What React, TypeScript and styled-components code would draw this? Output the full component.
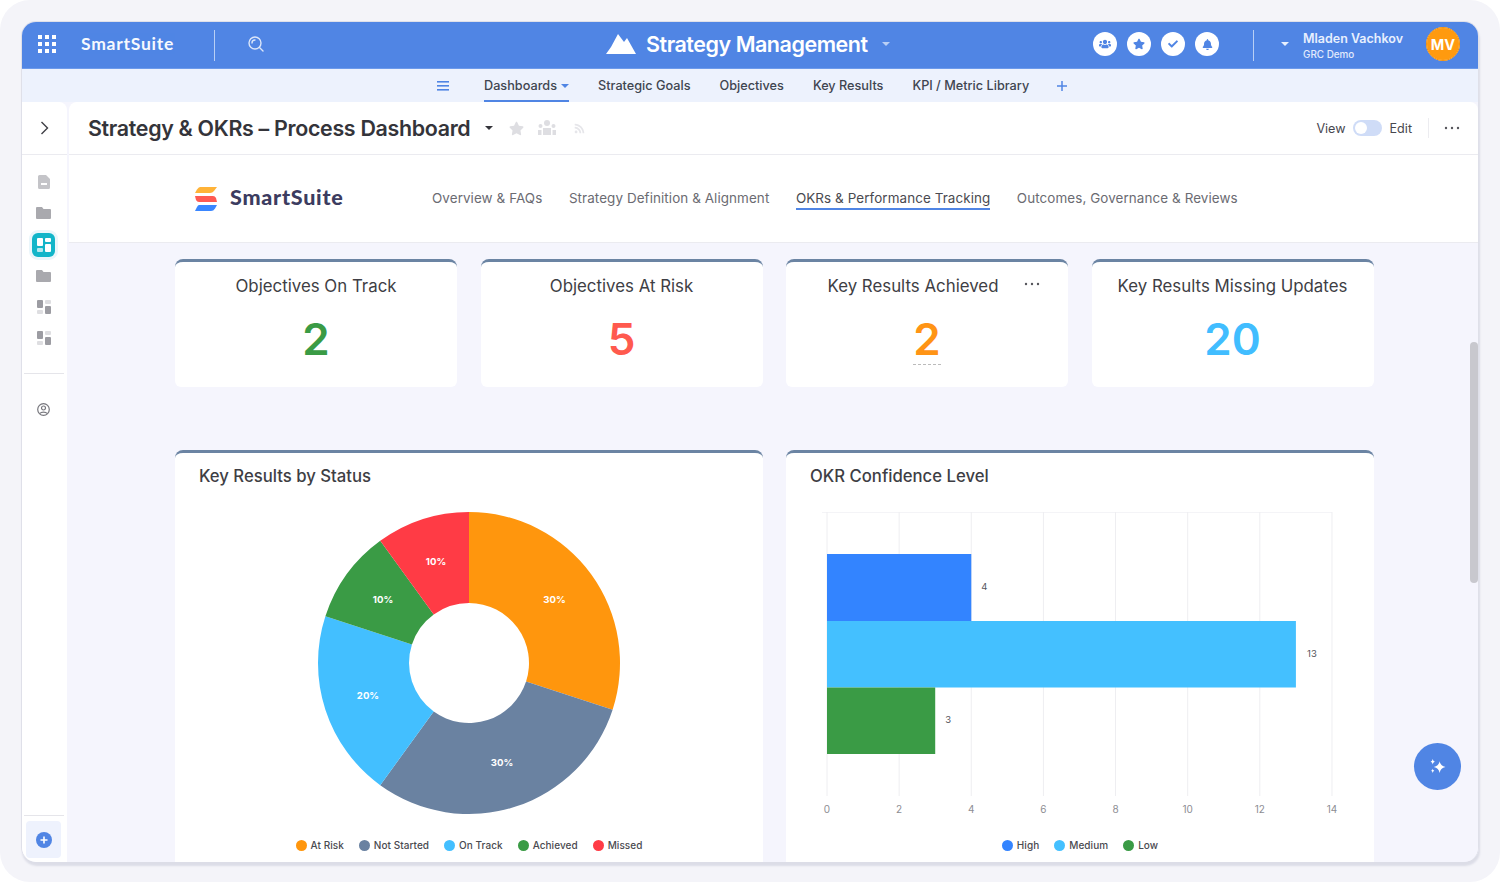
import React from 'react';
import styled, { createGlobalStyle } from 'styled-components';
import { FaUsers, FaStar, FaCheck, FaBell, FaRss } from 'react-icons/fa';

const Global = createGlobalStyle`
  html, body { margin: 0; padding: 0; background: #fff; }
  body { font-family: Inter, "Liberation Sans", sans-serif; -webkit-font-smoothing: antialiased; }
  * { box-sizing: border-box; }
`;

const Frame = styled.div`
  width: 1500px; height: 882px; padding: 21px 21px 20px 21px;
  background: #f4f4f9; border-radius: 30px; overflow: hidden;
`;
const Win = styled.div`
  position: relative; width: 1458px; height: 841px; overflow: hidden;
  border: 1px solid #dfe0e9; border-bottom: 0; border-radius: 15px;
  background: #f5f5fd; display: flex; flex-direction: column;
`;
const WinShadowWrap = styled.div`
  border-radius: 15px; box-shadow: 1px 4px 2px #dcdde7;
`;
const Header = styled.header`
  height: 47px; background: #5085e4; display: flex; align-items: center; flex: none; padding-bottom: 2px;
  border-bottom: 1px solid #6c9aeb; color: #fff;
`;
const HeaderLeft = styled.div`
  width: 584px; display: flex; align-items: center; padding-left: 16px; flex: none;
`;
const Brand = styled.span`
  margin: 0 0 2px 25px; font-family: Lato, Inter, sans-serif; font-size: 17.5px; font-weight: 700; letter-spacing: .75px; width: 133px; opacity: .95;
`;
const VLine = styled.span<{ $ml?: number }>`
  width: 1px; height: 31px; background: #b9cff5; margin: 2px 0 0 ${p => p.$ml ?? 0}px; flex: none;
`;
const SearchWrap = styled.span`
  margin-left: 32px; display: flex; opacity: .8;
`;
const AppTitle = styled.div`
  display: flex; align-items: center; font-size: 21.5px; font-weight: 600; letter-spacing: -.47px;
`;
const AppName = styled.span`
  margin-left: 10px;
`;
const SmallCaret = styled.span<{ $c?: string; $ml?: number }>`
  display: inline-block; width: 0; height: 0; border-left: 4px solid transparent; border-right: 4px solid transparent;
  border-top: 4px solid ${p => p.$c ?? '#fff'}; margin-left: ${p => p.$ml ?? 0}px; flex: none;
`;
const HeaderRight = styled.div`
  margin-left: auto; display: flex; align-items: center; padding-right: 18px;
`;
const CircleBtn = styled.span`
  width: 24px; height: 24px; border-radius: 50%; background: #fff; color: #5085e4; display: flex; align-items: center; justify-content: center; margin-right: 10px; font-size: 12px;
`;
const UserBlock = styled.div`
  margin: 5px 0 0 14px; width: 123px; line-height: 1;
`;
const UserName = styled.div`
  font-size: 12.5px; font-weight: 600; color: #e8f0fe;
`;
const UserOrg = styled.div`
  font-size: 9.9px; font-weight: 500; margin-top: 4px; color: #e2ebfc;
`;
const Avatar = styled.span`
  width: 34px; height: 34px; border-radius: 50%; background: #ff9a0f; border: 1px solid #ffd9a0; outline: 1px solid #ef9012;
  outline-offset: -1px; display: flex; align-items: center; justify-content: center; font-size: 14.5px; font-weight: 700; color: #fff;
`;
const SubNav = styled.nav`
  height: 33px; background: #edf2fd; display: flex; align-items: stretch; padding-left: 415px; flex: none; font-size: 12.7px; font-weight: 500; color: #3f4550;
`;
const MenuSlot = styled.span`
  display: flex; align-items: center; width: 47px; color: #5085e4;
`;
const SubItem = styled.span<{ $active?: boolean }>`
  display: flex; align-items: center; gap: 4px; margin-right: 29px; padding-top: 2px;
  border-bottom: 2px solid ${p => (p.$active ? '#5085e4' : 'transparent')};
`;
const PlusSlot = styled.span`
  display: flex; align-items: center; margin-left: -1px;
`;
const Body = styled.div`
  flex: 1; display: flex; min-height: 0; gap: 2px;
`;
const Side = styled.aside`
  width: 45px; background: #fff; display: flex; flex-direction: column; align-items: center; flex: none; border-radius: 0 8px 0 0;
`;
const SideTop = styled.div`
  width: 100%; height: 53px; display: flex; align-items: center; justify-content: center; border-bottom: 1px solid #ebebf0; flex: none;
`;
const SideIcon = styled.span<{ $mt: number }>`
  display: flex; align-items: center; justify-content: center; margin: ${p => p.$mt}px 2px 0 0; height: 16px; width: 16px; flex: none;
`;
const ActiveIcon = styled.span`
  width: 23px; height: 24px; border-radius: 6px; background: #12b5c9; display: flex; align-items: center; justify-content: center; margin: 12px 2px 0 0; box-shadow: 0 0 0 3px #eaf6fb; flex: none;
`;
const SideRule = styled.div<{ $mt?: string }>`
  width: 40px; height: 1px; background: #e5e5ea; margin: ${p => p.$mt ?? '0'} 1px 0 0; flex: none;
`;
const SideBottom = styled.div`
  width: 35px; height: 37px; background: #eef2fd; border-radius: 4px; margin: 5px 2px 4px 0; display: flex; align-items: center; justify-content: center; flex: none;
`;
const Main = styled.main`
  flex: 1; display: flex; flex-direction: column; min-width: 0; border-radius: 8px 8px 0 0; overflow: hidden;
`;
const TitleBar = styled.div`
  height: 53px; background: #fff; border-bottom: 1px solid #ebebf0; display: flex; align-items: center; padding-left: 19px; flex: none;
`;
const PageTitle = styled.h1`
  margin: 0; font-size: 21.4px; font-weight: 600; letter-spacing: -.31px; color: #34343a; white-space: nowrap;
`;
const TitleIcons = styled.span`
  display: flex; align-items: center; gap: 14px; margin-left: 16px; color: #dedee2; font-size: 15px;
`;
const RssIco = styled(FaRss)`
  margin-left: 4px; color: #e6e6ea;
`;
const TitleRight = styled.div`
  margin-left: auto; display: flex; align-items: center; padding-right: 18px; font-size: 12.6px; color: #47474e;
`;
const Toggle = styled.span`
  width: 29px; height: 16px; border-radius: 8px; background: #cfdcf7; margin: 0 8px 0 7px; position: relative; display: block;
  &::after { content: ''; position: absolute; left: 2px; top: 2px; width: 12px; height: 12px; border-radius: 50%; background: #fff; }
`;
const ThinRule = styled.span`
  width: 1px; height: 20px; background: #ececf0; margin: 0 15px 0 16px;
`;
const LogoRow = styled.div`
  height: 88px; background: #fff; border-bottom: 1px solid #ebebf0; display: flex; align-items: center; padding-left: 126px; flex: none;
`;
const LogoText = styled.span`
  font-family: Lato, Inter, sans-serif; font-size: 21.5px; font-weight: 900; color: #3c3c60; margin: 0 0 4px 13px; width: 202px; letter-spacing: .75px;
`;
const PageTab = styled.span<{ $active?: boolean }>`
  font-size: 13.45px; letter-spacing: .08px; color: ${p => (p.$active ? '#4a4a50' : '#6b6b72')}; margin: 0 26.5px 2px 0; padding: 4px 0 2px; white-space: nowrap;
  border-bottom: 2px solid ${p => (p.$active ? '#5085e4' : 'transparent')};
`;
const Scroll = styled.div`
  flex: 1; background: #f5f5fd; padding: 16px 0 0 106px; min-height: 0;
`;
const StatGrid = styled.div`
  display: grid; grid-template-columns: repeat(4, 282px); column-gap: 23.5px; width: 1199px;
`;
const StatCard = styled.div`
  position: relative; height: 128px; background: #fff; border-top: 3px solid #6b84a3; border-radius: 8px 8px 6px 6px; text-align: center; padding-top: 13px;
`;
const StatLabel = styled.div<{ $inset?: boolean }>`
  font-size: 16.85px; font-weight: 400; color: #3e3e44; line-height: 22px; padding-right: ${p => (p.$inset ? 28 : 0)}px;
`;
const StatValue = styled.div<{ $c: string; $dash?: boolean }>`
  position: relative; display: inline-block; font-size: 44px; font-weight: 600; line-height: 50px; margin-top: 17px; color: ${p => p.$c};
  ${p => p.$dash ? `&::after { content: ''; position: absolute; left: 0; right: 0; bottom: -1px; border-bottom: 1px dashed #bbb; }` : ''}
`;
const CardDots = styled.span`
  position: absolute; top: 20px; right: 28px; display: flex;
`;
const ChartGrid = styled.div`
  display: grid; grid-template-columns: repeat(2, 588px); column-gap: 23px; margin-top: 63px; width: 1199px;
`;
const ChartCard = styled.section`
  height: 420px; background: #fff; border-top: 3px solid #6b84a3; border-radius: 8px 8px 0 0; position: relative;
`;
const ChartTitle = styled.h2`
  margin: 0; height: 47px; padding: 11px 0 0 24px; font-size: 16.7px; line-height: 24px; font-weight: 500; color: #3e3e44;
`;
const ChartSvg = styled.svg`
  display: block;
`;
const Legend = styled.div`
  display: flex; justify-content: center; align-items: center; gap: 15px; margin-top: 2px; height: 16px; font-size: 10px; letter-spacing: .05px; font-weight: 500; color: #4a4a50;
`;
const LegendItem = styled.span`
  display: flex; align-items: center; gap: 4px;
`;
const LegendDot = styled.span<{ $c: string }>`
  width: 11px; height: 11px; border-radius: 50%; background: ${p => p.$c};
`;
const ScrollThumb = styled.div`
  position: absolute; right: 0; top: 320px; width: 8px; height: 241px; background: #c8c8ce; border-radius: 4px;
`;
const Fab = styled.button`
  position: absolute; left: 1392px; top: 721px; width: 47px; height: 47px; border: 0; padding: 0; border-radius: 50%; background: #5085e4; display: flex; align-items: center; justify-content: center;
`;

const GridDots = () => (
  <svg width="18" height="18" viewBox="0 0 18 18" fill="#fff">
    {[0, 7, 14].flatMap(y => [0, 7, 14].map(x => <rect key={`${x}-${y}`} x={x} y={y} width="4" height="4" />))}
  </svg>
);
const SearchIco = () => (
  <svg width="18" height="18" viewBox="0 0 18 18" fill="none" stroke="#fff" strokeWidth="1.4" strokeLinecap="round">
    <circle cx="8" cy="8" r="6" /><path d="M5 8a3 3 0 0 1 3-3M12.5 12.5l3.5 3.5" />
  </svg>
);
const Mountain = () => (
  <svg width="30" height="20" viewBox="0 0 30 20" fill="#fff"><path d="M0 20 L5 13 L12 0 L18 8 L21 4 L30 20 Z" /></svg>
);
const MenuIco = () => (
  <svg width="12" height="10" viewBox="0 0 12 10" fill="currentColor"><rect width="12" height="1.6" /><rect y="4" width="12" height="1.6" /><rect y="8" width="12" height="1.6" /></svg>
);
const PlusIco = () => (
  <svg width="10" height="10" viewBox="0 0 10 10" stroke="#5085e4" strokeWidth="1.5"><path d="M5 0v10M0 5h10" /></svg>
);
const ChevronIco = () => (
  <svg width="9" height="14" viewBox="0 0 9 14" fill="none" stroke="#3f3f46" strokeWidth="1.4"><path d="M1.500 1l6 6-6 6" /></svg>
);
const FileIco = () => (
  <svg width="12" height="14" viewBox="0 0 12 14" fill="#c4c4c8"><path d="M1.5 0H8l4 4v8.5A1.5 1.5 0 0 1 10.5 14h-9A1.5 1.5 0 0 1 0 12.500v-11A1.500 1.500 0 0 1 1.500 0Z" /><rect x="3" y="8" width="6" height="2" fill="#fff" /></svg>
);
const FolderIco = () => (
  <svg width="15" height="12" viewBox="0 0 15 12" fill="#a9a9ae"><path d="M1 0h5l1.500 2H14a1 1 0 0 1 1 1v8a1 1 0 0 1-1 1H1a1 1 0 0 1-1-1V1a1 1 0 0 1 1-1Z" /></svg>
);
const TilesIco = () => (
  <svg width="14" height="15" viewBox="0 0 14 15">
    <rect width="6" height="8" rx="1" fill="#9c9ca2" /><rect x="8" width="6" height="4" rx="1" fill="#dedee1" />
    <rect y="10" width="6" height="4" rx="1" fill="#dedee1" /><rect x="8" y="6" width="6" height="8" rx="1" fill="#9c9ca2" />
  </svg>
);
const ActiveTiles = () => (
  <svg width="14" height="15" viewBox="0 0 14 15" fill="#fff">
    <rect width="6" height="8" rx="1" /><rect x="8" width="6" height="4" rx="1" /><rect y="10" width="6" height="4" rx="1" opacity=".7" /><rect x="8" y="6" width="6" height="8" rx="1" />
  </svg>
);
const ProfileIco = () => (
  <svg width="13" height="13" viewBox="0 0 13 13" fill="none" stroke="#77777d" strokeWidth="1.200">
    <circle cx="6.500" cy="6.500" r="5.800" /><circle cx="6.500" cy="5" r="2" /><path d="M3 10.500c1-1.800 6-1.800 7 0" />
  </svg>
);
const PlusCircle = () => (
  <svg width="16" height="16" viewBox="0 0 16 16"><circle cx="8" cy="8" r="8" fill="#5085e4" /><path d="M8 4.500v7M4.500 8h7" stroke="#fff" strokeWidth="1.600" /></svg>
);
const Dots = ({ c = '#55555c' }: { c?: string }) => (
  <svg width="16" height="4" viewBox="0 0 16 4" fill={c}><circle cx="2" cy="2" r="1.200" /><circle cx="8" cy="2" r="1.200" /><circle cx="14" cy="2" r="1.200" /></svg>
);
const LogoMark = () => (
  <svg width="22" height="24" viewBox="0 0 22 24">
    <path d="M5 0H22L19 4Q17.500 6 15 6H0L2 2.500Q3.500 0 5 0Z" fill="#ffb338" />
    <path d="M0 9H18Q20 9 21 11L22 15H4Q2 15 1 13Z" fill="#ff5a52" />
    <path d="M4 18H22L20 21.500Q18.500 24 16 24H0L2 20Q3 18 4 18Z" fill="#3a86ff" />
  </svg>
);
const People = () => (
  <svg width="18" height="16" viewBox="0 0 18 16" fill="#dedee2">
    <circle cx="9" cy="3" r="3" /><circle cx="2.500" cy="6" r="2" /><circle cx="15.500" cy="6" r="2" />
    <path d="M5 8h8v7H5zM0 10h3.500v5H0zM14.500 10H18v5h-3.500z" />
  </svg>
);
const Sparkle = () => (
  <svg width="17" height="17" viewBox="0 0 16 16" fill="#fff">
    <path d="M10 3Q10.700 7.300 15.500 8.500Q10.700 9.700 10 14Q9.300 9.700 4.500 8.500Q9.300 7.300 10 3Z" />
    <path d="M3.500 1Q3.800 3 5.500 3.500Q3.800 4 3.500 6Q3.200 4 1.500 3.500Q3.200 3 3.500 1Z" />
    <path d="M3.500 10Q3.700 11.500 5 12Q3.700 12.500 3.500 14Q3.300 12.500 2 12Q3.300 11.500 3.500 10Z" />
  </svg>
);

const CX = 294, CY = 163, RO = 151, RI = 60;
const pt = (r: number, a: number) => {
  const t = (a * Math.PI) / 180;
  return `${(CX + r * Math.sin(t)).toFixed(2)} ${(CY - r * Math.cos(t)).toFixed(2)}`;
};
const slice = (a: number, b: number) =>
  `M${pt(RI, a)} L${pt(RO, a)} A${RO} ${RO} 0 0 1 ${pt(RO, b)} L${pt(RI, b)} A${RI} ${RI} 0 0 0 ${pt(RI, a)} Z`;

const pieData = [
  { name: 'At Risk', c: '#ff960d', a: 0, b: 108, lx: 379.5, ly: 100.5, t: '30%' },
  { name: 'Not Started', c: '#6a82a1', a: 108, b: 216, lx: 327, ly: 263.5, t: '30%' },
  { name: 'On Track', c: '#43bfff', a: 216, b: 288, lx: 193, ly: 196.5, t: '20%' },
  { name: 'Achieved', c: '#3a9b45', a: 288, b: 324, lx: 208, ly: 100.5, t: '10%' },
  { name: 'Missed', c: '#ff3b45', a: 324, b: 360, lx: 261, ly: 62.5, t: '10%' },
];

const OX = 41, PX = 36.07;
const X = (v: number) => OX + v * PX;
const bars = [
  { name: 'High', c: '#3384ff', v: 4, y: 54, h: 67, tc: 87 },
  { name: 'Medium', c: '#44c0ff', v: 13, y: 121, h: 66.500, tc: 154 },
  { name: 'Low', c: '#3a9b45', v: 3, y: 187.500, h: 66.500, tc: 220 },
];

const stats = [
  { label: 'Objectives On Track', value: '2', c: '#3a9b45' },
  { label: 'Objectives At Risk', value: '5', c: '#ff5a4e' },
  { label: 'Key Results Achieved', value: '2', c: '#ff9415', dash: true, dots: true },
  { label: 'Key Results Missing Updates', value: '20', c: '#41bdff' },
];

export default function App() {
  return (
    <Frame>
      <Global />
      <WinShadowWrap>
        <Win>
          <Header>
            <HeaderLeft>
              <GridDots />
              <Brand>SmartSuite</Brand>
              <VLine />
              <SearchWrap><SearchIco /></SearchWrap>
            </HeaderLeft>
            <AppTitle>
              <Mountain />
              <AppName>Strategy Management</AppName>
              <SmallCaret $c="#b9cff5" $ml={14} />
            </AppTitle>
            <HeaderRight>
              <CircleBtn><FaUsers /></CircleBtn>
              <CircleBtn><FaStar /></CircleBtn>
              <CircleBtn><FaCheck size={10} /></CircleBtn>
              <CircleBtn><FaBell size={11} /></CircleBtn>
              <VLine $ml={24} />
              <SmallCaret $c="#e8f0fe" $ml={27} />
              <UserBlock>
                <UserName>Mladen Vachkov</UserName>
                <UserOrg>GRC Demo</UserOrg>
              </UserBlock>
              <Avatar>MV</Avatar>
            </HeaderRight>
          </Header>
          <SubNav>
            <MenuSlot><MenuIco /></MenuSlot>
            <SubItem $active>Dashboards <SmallCaret $c="#5085e4" /></SubItem>
            <SubItem>Strategic Goals</SubItem>
            <SubItem>Objectives</SubItem>
            <SubItem>Key Results</SubItem>
            <SubItem>KPI / Metric Library</SubItem>
            <PlusSlot><PlusIco /></PlusSlot>
          </SubNav>
          <Body>
            <Side>
              <SideTop><ChevronIco /></SideTop>
              <SideIcon $mt={19}><FileIco /></SideIcon>
              <SideIcon $mt={15}><FolderIco /></SideIcon>
              <ActiveIcon><ActiveTiles /></ActiveIcon>
              <SideIcon $mt={11}><FolderIco /></SideIcon>
              <SideIcon $mt={15}><TilesIco /></SideIcon>
              <SideIcon $mt={15}><TilesIco /></SideIcon>
              <SideRule $mt="27px" />
              <SideIcon $mt={27}><ProfileIco /></SideIcon>
              <SideRule $mt="auto" />
              <SideBottom><PlusCircle /></SideBottom>
            </Side>
            <Main>
              <TitleBar>
                <PageTitle>Strategy &amp; OKRs – Process Dashboard</PageTitle>
                <SmallCaret $c="#34343a" $ml={15} />
                <TitleIcons>
                  <FaStar />
                  <People />
                  <RssIco size={11} />
                </TitleIcons>
                <TitleRight>
                  View<Toggle />Edit<ThinRule /><Dots />
                </TitleRight>
              </TitleBar>
              <LogoRow>
                <LogoMark />
                <LogoText>SmartSuite</LogoText>
                <PageTab>Overview &amp; FAQs</PageTab>
                <PageTab>Strategy Definition &amp; Alignment</PageTab>
                <PageTab $active>OKRs &amp; Performance Tracking</PageTab>
                <PageTab>Outcomes, Governance &amp; Reviews</PageTab>
              </LogoRow>
              <Scroll>
                <StatGrid>
                  {stats.map(s => (
                    <StatCard key={s.label}>
                      <StatLabel $inset={s.dots}>{s.label}</StatLabel>
                      <StatValue $c={s.c} $dash={s.dash}>{s.value}</StatValue>
                      {s.dots && <CardDots><Dots /></CardDots>}
                    </StatCard>
                  ))}
                </StatGrid>
                <ChartGrid>
                  <ChartCard>
                    <ChartTitle>Key Results by Status</ChartTitle>
                    <ChartSvg width="588" height="335" viewBox="0 0 588 335">
                      {pieData.map(d => <path key={d.name} d={slice(d.a, d.b)} fill={d.c} />)}
                      {pieData.map(d => (
                        <text key={d.name} x={d.lx} y={d.ly} fill="#fff" fontSize="9.6" fontWeight="700" textAnchor="middle" dominantBaseline="middle" fontFamily="Inter, sans-serif">{d.t}</text>
                      ))}
                    </ChartSvg>
                    <Legend>
                      {pieData.map(d => <LegendItem key={d.name}><LegendDot $c={d.c} />{d.name}</LegendItem>)}
                    </Legend>
                  </ChartCard>
                  <ChartCard>
                    <ChartTitle>OKR Confidence Level</ChartTitle>
                    <ChartSvg width="588" height="335" viewBox="0 0 588 335">
                      <line x1={OX - 5} x2={X(14)} y1="12.500" y2="12.500" stroke="#f4f4f7" />
                      {[0, 2, 4, 6, 8, 10, 12, 14].map(v => (
                        <g key={v}>
                          <line x1={X(v)} x2={X(v)} y1="12" y2="296" stroke="#eeeef1" />
                          <text x={X(v)} y="310" fontSize="10" fill="#8d8d93" textAnchor="middle" dominantBaseline="middle" fontFamily="Inter, sans-serif">{v}</text>
                        </g>
                      ))}
                      {bars.map(b => (
                        <g key={b.name}>
                          <rect x={X(0)} y={b.y} width={b.v * PX} height={b.h} fill={b.c} />
                          <text x={X(b.v) + (b.v > 9 ? 16 : 13)} y={b.tc} fontSize="9.500" fill="#55555c" textAnchor="middle" dominantBaseline="middle" fontFamily="Inter, sans-serif">{b.v}</text>
                        </g>
                      ))}
                    </ChartSvg>
                    <Legend>
                      {bars.map(b => <LegendItem key={b.name}><LegendDot $c={b.c} />{b.name}</LegendItem>)}
                    </Legend>
                  </ChartCard>
                </ChartGrid>
              </Scroll>
            </Main>
          </Body>
          <ScrollThumb />
          <Fab aria-label="Assistant"><Sparkle /></Fab>
        </Win>
      </WinShadowWrap>
    </Frame>
  );
}
